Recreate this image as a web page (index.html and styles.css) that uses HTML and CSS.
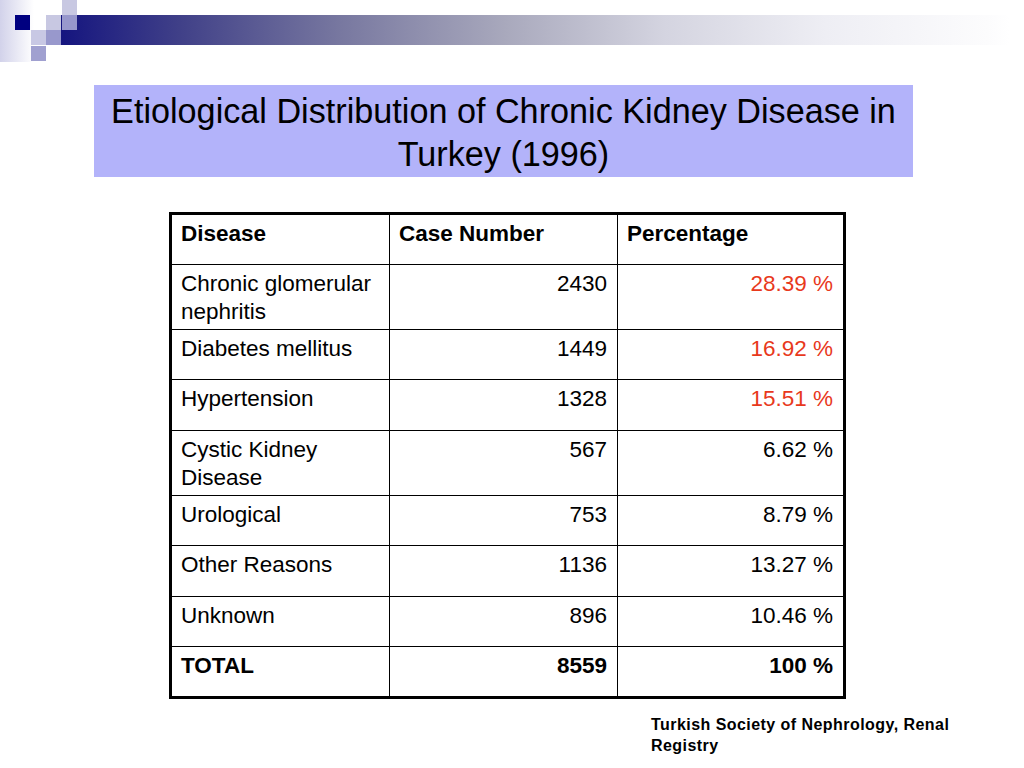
FILE: index.html
```html
<!DOCTYPE html>
<html lang="en">
<head>
<meta charset="utf-8">
<title>Etiological Distribution of Chronic Kidney Disease in Turkey (1996)</title>
<link rel="stylesheet" href="styles.css">
</head>
<body>
<div class="slide">
  <svg class="deco" width="1024" height="62" viewBox="0 0 1024 62" aria-hidden="true">
    <defs>
      <linearGradient id="bar" x1="61" y1="0" x2="1010" y2="0" gradientUnits="userSpaceOnUse">
        <stop offset="0" stop-color="#15157f"/>
        <stop offset="0.125" stop-color="#404088"/>
        <stop offset="0.295" stop-color="#7878a0"/>
        <stop offset="0.466" stop-color="#a8a8bc"/>
        <stop offset="0.635" stop-color="#d4d4e0"/>
        <stop offset="0.806" stop-color="#eeeef4"/>
        <stop offset="0.976" stop-color="#fcfcfd"/>
        <stop offset="1" stop-color="#ffffff"/>
      </linearGradient>
      <linearGradient id="side" x1="0" y1="0" x2="1" y2="0">
        <stop offset="0" stop-color="#d2d2ea"/>
        <stop offset="1" stop-color="#ffffff"/>
      </linearGradient>
    </defs>
    <rect x="0" y="0" width="34" height="62" fill="url(#side)"/>
    <rect x="61" y="15" width="963" height="30" fill="url(#bar)"/>
    <rect x="15" y="15" width="15" height="15" fill="#000080"/>
    <rect x="46" y="15" width="15" height="15" fill="#c8c8e2"/>
    <rect x="62" y="0" width="15" height="15" fill="#c8c8e2"/>
    <rect x="62" y="15" width="15" height="15" fill="#9898cc"/>
    <rect x="31" y="30" width="15" height="15" fill="#c8c8e4"/>
    <rect x="46" y="30" width="15" height="15" fill="#9898cc"/>
    <rect x="31" y="46" width="15" height="15" fill="#a0a0d0"/>
  </svg>

  <h1 class="title">Etiological Distribution of Chronic Kidney Disease in Turkey (1996)</h1>

  <table class="data">
    <colgroup>
      <col class="c1">
      <col class="c2">
      <col class="c3">
    </colgroup>
    <tr class="head">
      <th>Disease</th>
      <th>Case Number</th>
      <th>Percentage</th>
    </tr>
    <tr>
      <td>Chronic glomerular nephritis</td>
      <td class="num">2430</td>
      <td class="num hot">28.39 %</td>
    </tr>
    <tr>
      <td>Diabetes mellitus</td>
      <td class="num">1449</td>
      <td class="num hot">16.92 %</td>
    </tr>
    <tr>
      <td>Hypertension</td>
      <td class="num">1328</td>
      <td class="num hot">15.51 %</td>
    </tr>
    <tr>
      <td>Cystic Kidney Disease</td>
      <td class="num">567</td>
      <td class="num">6.62 %</td>
    </tr>
    <tr>
      <td>Urological</td>
      <td class="num">753</td>
      <td class="num">8.79 %</td>
    </tr>
    <tr>
      <td>Other Reasons</td>
      <td class="num">1136</td>
      <td class="num">13.27 %</td>
    </tr>
    <tr>
      <td>Unknown</td>
      <td class="num">896</td>
      <td class="num">10.46 %</td>
    </tr>
    <tr class="total">
      <td>TOTAL</td>
      <td class="num">8559</td>
      <td class="num">100 %</td>
    </tr>
  </table>

  <p class="source">Turkish Society of Nephrology, Renal Registry</p>
</div>
</body>
</html>
```

FILE: styles.css
```css
html, body {
  margin: 0;
  padding: 0;
  background: #ffffff;
}

body {
  font-family: "Liberation Sans", Arial, sans-serif;
  color: #000000;
}

.slide {
  width: 1024px;
  height: 768px;
  overflow: hidden;
  display: flex;
  flex-direction: column;
  align-items: flex-start;
}

.deco {
  display: block;
  flex: none;
}

.title {
  margin: 23px 0 0 94px;
  width: 819px;
  height: 92px;
  box-sizing: border-box;
  padding-top: 5px;
  background: #b3b3fa;
  text-align: center;
  font-size: 34.2px;
  font-weight: normal;
  line-height: 43px;
}

.data {
  margin: 35px 0 0 169px;
  border-collapse: collapse;
  table-layout: fixed;
  width: 677px;
  border: 3px solid #000000;
  font-size: 22.5px;
  line-height: 28px;
}

.c1 { width: 219px; }
.c2 { width: 228px; }
.c3 { width: 227px; }

.data tr {
  height: 50.5px;
}

.data th,
.data td {
  border: 1px solid #000000;
  padding: 5px 10px 3px 9px;
  vertical-align: top;
  text-align: left;
}

.data th {
  font-weight: bold;
}

.data .num {
  text-align: right;
}

.data .hot {
  color: #e8391c;
}

.data .total td {
  font-weight: bold;
}

.source {
  margin: 15px 0 0 651px;
  width: 320px;
  font-size: 16px;
  letter-spacing: 0.45px;
  line-height: 21px;
  font-weight: bold;
}
```
